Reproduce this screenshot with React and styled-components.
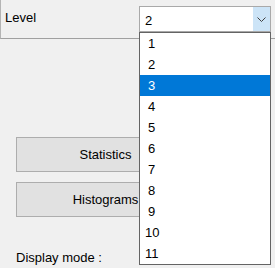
import styled, { createGlobalStyle } from "styled-components";

const GlobalStyle = createGlobalStyle`
  html, body {
    margin: 0;
    padding: 0;
    background: #f0f0f0;
  }
  body {
    font-family: "Liberation Sans", Arial, sans-serif;
    font-size: 13px;
    color: #000;
  }
`;

const Window = styled.div`
  position: relative;
  width: 275px;
  height: 268px;
  overflow: hidden;
  background: #f0f0f0;
`;

const TopPanel = styled.div`
  display: flex;
  justify-content: space-between;
  align-items: flex-start;
  height: 39px;
  box-sizing: border-box;
  padding: 6px 4px 0 4px;
  border-left: 1px solid #b4b4b4;
  border-bottom: 1px solid #a0a0a0;
`;

const Label = styled.div`
  padding-top: 4px;
  line-height: 15px;
`;

const Combo = styled.div`
  display: flex;
  width: 132px;
  height: 26px;
  box-sizing: border-box;
  border: 1px solid #a9a9a9;
  background: #fff;
`;

const ComboText = styled.div`
  flex: 1;
  padding: 6px 0 0 5px;
  line-height: 15px;
`;

const ComboButton = styled.div`
  width: 17px;
  display: flex;
  align-items: center;
  justify-content: center;
  background: #cce4f7;
`;

const DropList = styled.ul`
  position: absolute;
  left: 139px;
  top: 32px;
  width: 132px;
  margin: 0;
  padding: 0;
  list-style: none;
  box-sizing: border-box;
  border: 1px solid #646464;
  background: #fff;
`;

const Item = styled.li`
  height: 21px;
  line-height: 21px;
  padding-left: ${(p) => (p.$wide ? 5 : 8)}px;
  background: ${(p) => (p.$selected ? "#0078d7" : "transparent")};
  color: ${(p) => (p.$selected ? "#fff" : "#000")};
`;

const Controls = styled.div`
  display: flex;
  flex-direction: column;
  gap: 10px;
  padding: 98px 0 0 16px;
`;

const Button = styled.div`
  width: 179px;
  height: 35px;
  box-sizing: border-box;
  border: 1px solid #adadad;
  background: #e1e1e1;
  display: flex;
  align-items: center;
  justify-content: center;
`;

const ModeLabel = styled.div`
  padding: 33px 0 0 16px;
  line-height: 15px;
`;

const levels = [1, 2, 3, 4, 5, 6, 7, 8, 9, 10, 11];

export default function App() {
  return (
    <Window>
      <GlobalStyle />
      <TopPanel>
        <Label>Level</Label>
        <Combo>
          <ComboText>2</ComboText>
          <ComboButton>
            <svg width="9" height="5" viewBox="0 0 9 5">
              <path d="M0.5 0.5 L4.5 4.5 L8.5 0.5" fill="none" stroke="#404040" strokeWidth="1" />
            </svg>
          </ComboButton>
        </Combo>
      </TopPanel>
      <Controls>
        <Button>Statistics</Button>
        <Button>Histograms</Button>
      </Controls>
      <ModeLabel>Display mode :</ModeLabel>
      <DropList>
        {levels.map((n) => (
          <Item key={n} $selected={n === 3} $wide={n >= 10}>
            {n}
          </Item>
        ))}
      </DropList>
    </Window>
  );
}
